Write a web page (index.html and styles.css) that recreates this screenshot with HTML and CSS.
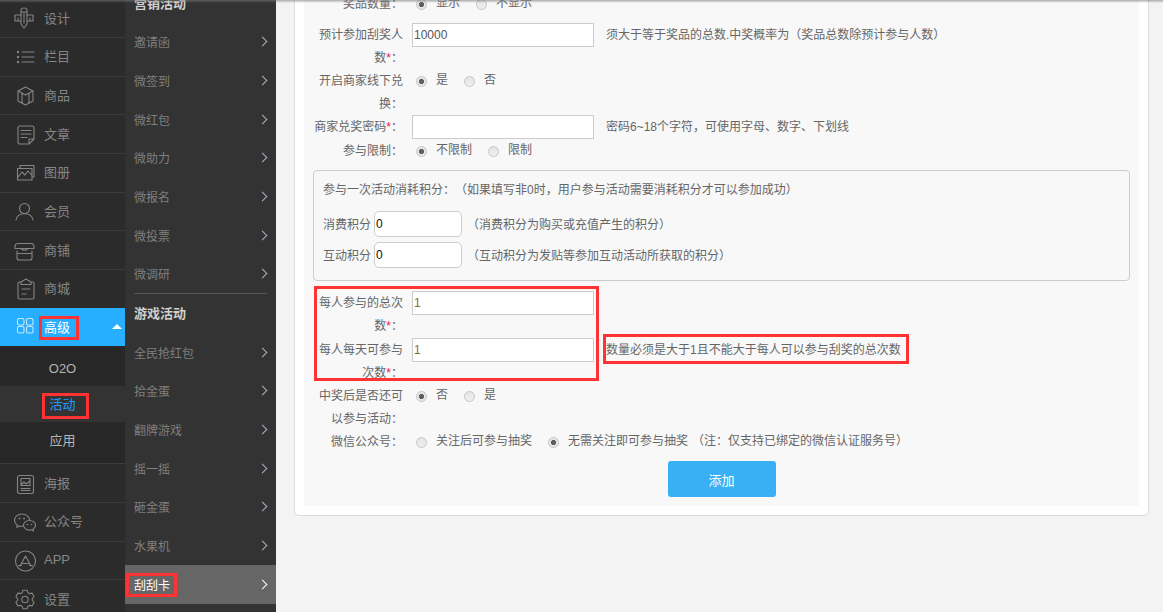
FILE: index.html
```html
<!DOCTYPE html>
<html lang="zh-CN">
<head>
<meta charset="utf-8">
<title>刮刮卡</title>
<link rel="stylesheet" href="styles.css">
</head>
<body>
<div class="app">
  <nav class="rail">
    <a class="rail-item"><svg class="ico" viewBox="0 0 22 22"><path d="M7 8H1v6h6M13 8h6v6h-6M4 11v3M16 11v3"/><path d="M7 3q0-2 3-2t3 2v14l-3 4-3-4zM7 5h6M10 6v10"/></svg>设计</a>
    <a class="rail-item"><svg class="ico" viewBox="0 0 22 22"><circle class="solid" cx="4" cy="6" r="1.2"/><circle class="solid" cx="4" cy="11" r="1.2"/><circle class="solid" cx="4" cy="16" r="1.2"/><path d="M8 6h12M8 11h12M8 16h12"/></svg>栏目</a>
    <a class="rail-item"><svg class="ico" viewBox="0 0 22 22"><path d="M11.5 2 19 6v10l-7.500 4L4 16V6zM4 6l7.500 4L19 6M8 8.500V18M15 8.500V18"/></svg>商品</a>
    <a class="rail-item"><svg class="ico" viewBox="0 0 22 22"><path d="M6 3h12q2 0 2 2v11l-5 5H6q-2 0-2-2V5q0-2 2-2zM20 16h-5v5M7 7.500h10M7 11h10M7 14.500h6"/></svg>文章</a>
    <a class="rail-item"><svg class="ico" viewBox="0 0 22 22"><path d="M3.500 6.500h14.500v11.500H3.500zM6 6V3.500h14V15h-2M4 15l4-5 3 3 3-4 3.500 4"/></svg>图册</a>
    <a class="rail-item"><svg class="ico" viewBox="0 0 22 22"><circle cx="10.500" cy="7.500" r="5"/><path d="M2 19q1-6 8.500-6.500Q18 13 19 19"/></svg>会员</a>
    <a class="rail-item"><svg class="ico" viewBox="0 0 22 22"><path d="M4 4.500h13q3 0 3 3v2H1v-2q0-3 3-3zM3 12v7q0 2 2 2h11q2 0 2-2v-7M7 9.500q3.500 3.500 7 0M3 14.500h15"/></svg>商铺</a>
    <a class="rail-item"><svg class="ico" viewBox="0 0 22 22"><path d="M7 4H5.500Q4 4 4 5.500v14Q4 21 5.500 21h13q1.500 0 1.500-1.500v-14Q20 4 18.500 4H17M7 6.500V4l5-3 5 3v2.500zM8 11h8M8 16h4"/></svg>商城</a>
    <div class="rail-group">
      <a class="rail-item is-open"><svg class="ico ico-open" viewBox="0 0 22 22"><rect x="3.500" y="2.500" width="6.500" height="6.500" rx="1.500"/><rect x="12.500" y="2.500" width="6.500" height="6.500" rx="1.500"/><rect x="3.500" y="10.500" width="6.500" height="6.500" rx="1.500"/><rect x="12.500" y="10.500" width="6.500" height="6.500" rx="1.500"/></svg><span>高级</span><i class="caret"></i></a>
      <div class="rail-sub">
        <a class="rail-sub-item">O2O</a>
        <a class="rail-sub-item is-current">活动</a>
        <a class="rail-sub-item">应用</a>
      </div>
    </div>
    <a class="rail-item"><svg class="ico" viewBox="0 0 22 22"><rect x="3.500" y="3.500" width="16" height="18" rx="2"/><path d="M7 6.500h9v7H7zM7 13l3-3 2 2 4-3M7 16.500h9M7 18.500h9"/></svg>海报</a>
    <a class="rail-item"><svg class="ico" viewBox="0 0 22 22"><path d="M8 3C3.800 3 .500 5.800.500 9.200c0 2 1.100 3.700 2.800 4.800l-.6 2.200 2.500-1.300c.9.300 1.800.4 2.800.4 4.200 0 7.500-2.800 7.500-6.100S12.200 3 8 3z"/><path class="masked" d="M15.500 9.500c-3.300 0-6 2.200-6 4.800s2.700 4.800 6 4.800c.7 0 1.400-.1 2-.3l2 1.100-.5-1.800c1.500-.9 2.500-2.300 2.500-3.800 0-2.600-2.700-4.800-6-4.800z"/><circle class="solid" cx="5.500" cy="7.500" r=".9"/><circle class="solid" cx="10" cy="7.500" r=".9"/><circle class="solid" cx="13.500" cy="13.500" r=".8"/><circle class="solid" cx="17.500" cy="13.500" r=".8"/></svg>公众号</a>
    <a class="rail-item"><svg class="ico" viewBox="0 0 22 22"><circle cx="11.500" cy="11" r="10"/><path d="M6 16l5.500-10L17 16M8.500 13.500h6M4.500 15.500h3M15.500 15.500h3"/></svg>APP</a>
    <a class="rail-item"><svg class="ico" viewBox="0 0 22 22"><path d="M8.030 4.830 9.020 2.210h3.960l.99 2.620 1.320.76 2.770-.45 1.970 3.420-1.770 2.180v1.520l1.770 2.180-1.970 3.420-2.770-.45-1.320.76-.99 2.620H9.020l-.99-2.620-1.320-.76-2.770.45-1.970-3.420 1.770-2.180v-1.520L1.970 8.560l1.970-3.420 2.770.45z"/><circle cx="11" cy="11.500" r="3.200"/></svg>设置</a>
  </nav>

  <nav class="panel">
    <h4 class="panel-title panel-first">营销活动</h4>
    <a class="panel-item">邀请函</a>
    <a class="panel-item">微签到</a>
    <a class="panel-item">微红包</a>
    <a class="panel-item">微助力</a>
    <a class="panel-item">微报名</a>
    <a class="panel-item">微投票</a>
    <a class="panel-item">微调研</a>
    <hr class="panel-rule">
    <h4 class="panel-title">游戏活动</h4>
    <a class="panel-item">全民抢红包</a>
    <a class="panel-item">拾金蛋</a>
    <a class="panel-item">翻牌游戏</a>
    <a class="panel-item">摇一摇</a>
    <a class="panel-item">砸金蛋</a>
    <a class="panel-item">水果机</a>
    <a class="panel-item is-active">刮刮卡</a>
  </nav>

  <main class="main">
    <div class="card">
      <form class="form">
        <div class="row">
          <label class="lbl">奖品数量：</label>
          <div class="opts">
            <input class="radio" type="radio" name="a" checked><span class="opt">显示</span>
            <input class="radio" type="radio" name="a"><span class="opt">不显示</span>
          </div>
        </div>
        <div class="row row-after-first">
          <label class="lbl">预计参加刮奖人数<em>*</em>：</label>
          <input class="text" type="text" value="10000">
          <span class="hint">须大于等于奖品的总数.中奖概率为（奖品总数除预计参与人数）</span>
        </div>
        <div class="row">
          <label class="lbl">开启商家线下兑换：</label>
          <div class="opts">
            <input class="radio" type="radio" name="b" checked><span class="opt">是</span>
            <input class="radio" type="radio" name="b"><span class="opt">否</span>
          </div>
        </div>
        <div class="row row-input">
          <label class="lbl">商家兑奖密码<em>*</em>：</label>
          <input class="text" type="text">
          <span class="hint">密码6~18个字符，可使用字母、数字、下划线</span>
        </div>
        <div class="row">
          <label class="lbl">参与限制：</label>
          <div class="opts">
            <input class="radio" type="radio" name="c" checked><span class="opt">不限制</span>
            <input class="radio" type="radio" name="c"><span class="opt">限制</span>
          </div>
        </div>

        <fieldset class="points">
          <p class="points-title">参与一次活动消耗积分：（如果填写非0时，用户参与活动需要消耗积分才可以参加成功）</p>
          <div class="points-row">
            <label class="points-lbl">消费积分</label>
            <input class="points-input" type="text" value="0">
            <span class="points-hint">（消费积分为购买或充值产生的积分）</span>
          </div>
          <div class="points-row">
            <label class="points-lbl">互动积分</label>
            <input class="points-input" type="text" value="0">
            <span class="points-hint">（互动积分为发贴等参加互动活动所获取的积分）</span>
          </div>
        </fieldset>

        <div class="row row-total">
          <label class="lbl">每人参与的总次数<em>*</em>：</label>
          <input class="text text-warm" type="text" value="1">
        </div>
        <div class="row row-daily">
          <label class="lbl">每人每天可参与次数<em>*</em>：</label>
          <input class="text text-warm" type="text" value="1">
          <span class="hint">数量必须是大于1且不能大于每人可以参与刮奖的总次数</span>
        </div>
        <div class="row">
          <label class="lbl">中奖后是否还可以参与活动：</label>
          <div class="opts">
            <input class="radio" type="radio" name="d" checked><span class="opt">否</span>
            <input class="radio" type="radio" name="d"><span class="opt">是</span>
          </div>
        </div>
        <div class="row">
          <label class="lbl">微信公众号：</label>
          <div class="opts">
            <input class="radio" type="radio" name="e"><span class="opt">关注后可参与抽奖</span>
            <input class="radio" type="radio" name="e" checked><span class="opt opt-tight">无需关注即可参与抽奖</span>
            <span class="note">（注：仅支持已绑定的微信认证服务号）</span>
          </div>
        </div>
        <div class="actions"><button class="btn" type="button">添加</button></div>
      </form>
    </div>
  </main>

  <div class="topshade"></div>
  <div class="mark mark-senior"></div>
  <div class="mark mark-activity"></div>
  <div class="mark mark-scratch"></div>
  <div class="mark mark-fields"></div>
  <div class="mark mark-hint"></div>
</div>
</body>
</html>
```
FILE: styles.css
```css
* { box-sizing: border-box; }
html, body { margin: 0; padding: 0; height: 100%; overflow: hidden; }
body {
  font-family: "Liberation Sans", "Noto Sans CJK SC", sans-serif;
  font-size: 12px;
  color: #666;
  background: #f3f3f3;
  text-spacing-trim: space-all;
}
.app { position: relative; display: flex; width: 1163px; height: 612px; overflow: hidden; }

/* first rail */
.rail { flex: none; width: 125px; height: 612px; background: #2b2b2b; overflow: hidden; }
.rail-item {
  display: flex;
  align-items: center;
  height: 38.67px;
  padding: 0 0 2px 14px;
  font-size: 13px;
  color: #858585;
  border-bottom: 1px solid #3c3c3c;
}
.rail-item:first-child { margin-top: -0.5px; }
.ico {
  flex: none;
  width: 22px;
  height: 22px;
  margin: 2px 8px 0 0;
  fill: none;
  stroke: #858585;
  stroke-width: 1.1;
  stroke-linejoin: round;
  stroke-linecap: round;
}
.ico .solid { fill: #858585; stroke: none; }
.ico .masked { fill: #2b2b2b; }
.rail-item.is-open { height: 38.14px; background: #28aeff; color: #fff; border-bottom: 0; }
.ico-open { stroke: #c4e9ff; }
.caret {
  margin-left: 42px;
  width: 0;
  height: 0;
  border-left: 5px solid transparent;
  border-right: 5px solid transparent;
  border-bottom: 5px solid #fff;
}
.rail-sub { padding: 4px 0 5px; background: #272727; border-bottom: 1px solid #3c3c3c; }
.rail-sub-item {
  display: block;
  height: 36px;
  line-height: 38px;
  text-align: center;
  font-size: 13px;
  color: #b4b4b4;
}
.rail-sub-item.is-current { background: #333; color: #1e9fff; }

/* second panel */
.panel { flex: none; width: 151px; height: 612px; background: #333; overflow: hidden; }
.panel-title {
  margin: 0;
  height: 38.67px;
  line-height: 40px;
  padding-left: 9px;
  font-size: 13px;
  font-weight: bold;
  color: #d0d0d0;
}
.panel-first { margin-top: -16px; }
.panel-item {
  display: flex;
  align-items: center;
  justify-content: space-between;
  height: 38.67px;
  padding: 0 10px 0 9px;
  font-size: 12px;
  color: #7f7f7f;
}
.panel-item::after {
  content: "";
  width: 6px;
  height: 6px;
  border-top: 1.5px solid #a9b4c4;
  border-right: 1.5px solid #a9b4c4;
  transform: rotate(45deg);
}
.panel-item.is-active { background: #666; color: #fff; }
.panel-item.is-active::after { border-color: #fff; }
.panel-rule { margin: 0 9px; height: 1px; border: 0; background: #555; }

/* main */
.main { flex: 1; min-width: 0; padding: 0 14px 0 18px; }
.card {
  margin-top: -20px;
  padding: 9px;
  background: #fff;
  border: 1px solid #dcdcdc;
  border-radius: 5px;
}
.form { padding: 2px 9px 9px; background: #f8f8f8; }
.row { display: flex; align-items: flex-start; line-height: 23px; }
.row-after-first { margin-top: 8px; }
.row-input { height: 24px; }
.row-total { margin-top: 10px; height: 47px; }
.row-daily { height: 46px; }
.lbl {
  flex: none;
  width: 90px;
  margin: 0 9px -1px 0;
  padding-top: 1px;
  text-align: right;
  color: #666;
}
.lbl em { font-style: normal; color: #e6174c; }

.text {
  flex: none;
  width: 182px;
  height: 24px;
  padding: 0 1px;
  border: 1px solid #ccc;
  border-radius: 0;
  outline: 0;
  background: #fff;
  font: 12px "Liberation Sans", "Noto Sans CJK SC", sans-serif;
  color: #555;
}
.text-warm { color: #8b6a3d; }
.hint { margin-left: 12px; padding-top: 1px; white-space: nowrap; }

.opts { display: flex; align-items: flex-start; margin-left: 4px; white-space: nowrap; }
.radio {
  appearance: none;
  flex: none;
  width: 11px;
  height: 11px;
  margin: 7px 9px 0 0;
  border: 1px solid #c6c6c6;
  border-radius: 50%;
  background: linear-gradient(#e4e4e4, #efefef);
}
.radio:checked { background: radial-gradient(circle, #5f5f5f 0 2.3px, #e6e6e6 2.9px); }
.opt { margin-right: 16px; }
.opt-tight { margin-right: 4px; }

.points {
  margin: 8px 0 0;
  padding: 8px 9px 12px;
  height: 111px;
  border: 1px solid #ccc;
  border-radius: 4px;
  min-width: 0;
}
.points-title { margin: 0 0 9px; line-height: 23px; }
.points-row { display: flex; align-items: center; height: 26px; margin-bottom: 5px; }
.points-lbl { flex: none; width: 48px; margin: 0 3px 2px 0; }
.points-input {
  flex: none;
  width: 88px;
  height: 26px;
  padding: 0 1px;
  border: 1px solid #ccc;
  border-radius: 5px;
  outline: 0;
  background: #fff;
  font: 12px "Liberation Sans", "Noto Sans CJK SC", sans-serif;
  color: #111;
}
.points-hint { margin: 0 0 2px 5px; }

.actions { display: flex; justify-content: center; margin-top: 8px; }
.btn {
  width: 108px;
  height: 36px;
  border: 0;
  border-radius: 3px;
  background: #38b0f3;
  color: #fff;
  font: 13px "Liberation Sans", "Noto Sans CJK SC", sans-serif;
}

/* overlays */
.topshade {
  position: absolute;
  left: 0;
  top: 0;
  width: 100%;
  height: 3px;
  background: linear-gradient(rgba(120, 120, 120, .6), rgba(120, 120, 120, 0));
}
.mark { position: absolute; border: 3px solid #ff3333; }
.mark-senior { left: 39px; top: 316px; width: 40px; height: 24px; }
.mark-activity { left: 42px; top: 393px; width: 47px; height: 26px; }
.mark-scratch { left: 126px; top: 573px; width: 51px; height: 24px; }
.mark-fields { left: 314px; top: 286px; width: 285px; height: 95px; }
.mark-hint { left: 603px; top: 334px; width: 306px; height: 30px; }
```
